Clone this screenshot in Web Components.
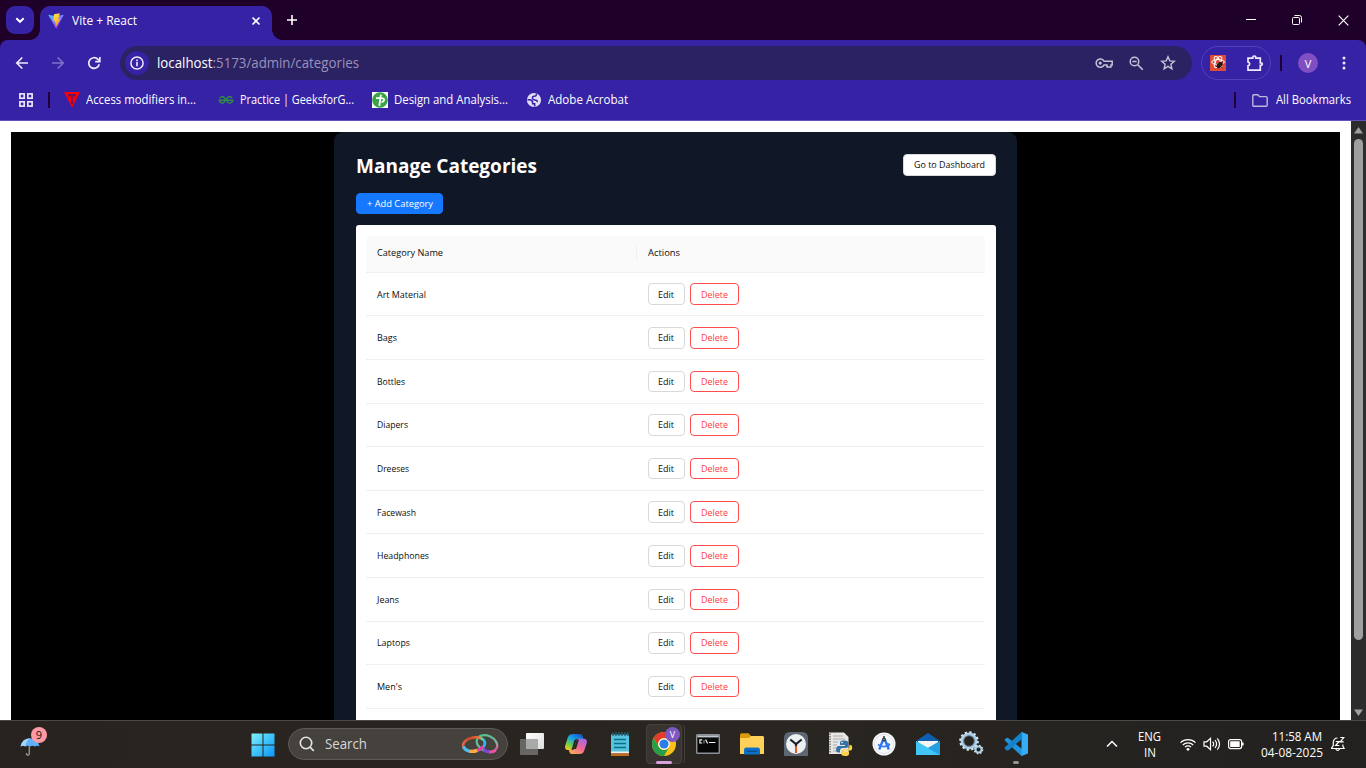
<!DOCTYPE html>
<html lang="en">
<head>
<meta charset="utf-8">
<title>Vite + React</title>
<style>
html,body{margin:0;width:1366px;height:768px;overflow:hidden;background:#000}
body{font-family:"Open Sans","Noto Sans",sans-serif}
</style>
</head>
<body>
<desktop-screen></desktop-screen>
<script>
function define(name, html, after){
  const t=document.createElement('template');
  t.innerHTML=html;
  customElements.define(name,class extends HTMLElement{
    connectedCallback(){
      if(this.shadowRoot)return;
      this.attachShadow({mode:'open'}).appendChild(t.content.cloneNode(true));
      if(after)after.call(this,this.shadowRoot);
    }
  });
}

/* Icons, each as [width, height, markup] */
const S='fill="none" stroke="currentColor"';
const ICONS={
 chevdown:[12,12,`<path d="M2.3 4.2 6 7.8 9.7 4.2" ${S} stroke-width="1.9"/>`],
 chevup:[12,12,`<path d="M1 8.5 6 3.5 11 8.5" ${S} stroke-width="1.5"/>`],
 vite:[16,16,`<defs><linearGradient id="a" x1="0" y1="0" x2=".6" y2="1"><stop stop-color="#41c5ff"/><stop offset="1" stop-color="#b838fb"/></linearGradient><linearGradient id="b" x1=".3" y1="0" x2=".6" y2="1"><stop stop-color="#ffe14b"/><stop offset="1" stop-color="#ff9d0a"/></linearGradient></defs><path d="M.2 1.8 8 3.2l7.8-1.4L8.3 15.8z" fill="url(#a)"/><path d="M11.8.2 6 1.2 5.2 8.2l2-.3-.5 2.5 1.5-.4-.7 4.1 4.9-8-2.1.3z" fill="url(#b)"/>`],
 x:[10,10,`<path d="M1.5 1.5l7 7M8.5 1.5l-7 7" ${S} stroke-width="1.6"/>`],
 plus:[12,12,`<path d="M6 1v10M1 6h10" ${S} stroke-width="1.6"/>`],
 min:[10,10,`<path d="M0 4.5h10" ${S}/>`],
 restore:[10,10,`<rect x=".5" y="2.5" width="7" height="7" rx="1" ${S}/><path d="M2.5.5h5a2 2 0 0 1 2 2v5" ${S}/>`],
 close:[11,11,`<path d="M.7.7l9.6 9.6M10.3.7.7 10.3" ${S} stroke-width="1.2"/>`],
 back:[14,14,`<path d="M13 7H2M7.3 1.5 1.8 7l5.5 5.5" ${S} stroke-width="1.7"/>`],
 fwd:[14,14,`<path d="M1 7h11M6.7 1.5 12.2 7l-5.5 5.5" ${S} stroke-width="1.6"/>`],
 reload:[14,14,`<path d="M12.2 8.2A5.3 5.3 0 1 1 10.9 3.4L12 4.5" ${S} stroke-width="1.7"/><path d="M12.8 1v4.6H8.2" ${S} stroke-width="1.7"/>`],
 info:[14,14,`<circle cx="7" cy="7" r="6.1" ${S} stroke-width="1.5"/><path d="M7 6v4.3M7 3.6v1.6" ${S} stroke-width="1.6"/>`],
 key:[18,12,`<path d="M9.1 4.3A4.2 4.2 0 1 0 9.1 7.9H12v2h4v-2h1.2V4.3z" ${S} stroke-width="1.5"/><circle cx="5.2" cy="6.1" r="1.6" fill="currentColor"/>`],
 lens:[15,15,`<circle cx="5.5" cy="5.5" r="4.3" ${S} stroke-width="1.5"/><path d="M8.8 8.8l5 5M3.3 5.5h4.4" ${S} stroke-width="1.6"/>`],
 star:[16,16,`<path d="M8 1.7l1.8 4.2 4.5.4-3.4 3 1 4.5L8 11.4l-3.9 2.4 1-4.5-3.4-3 4.5-.4z" ${S} stroke-width="1.4"/>`],
 ext:[16,16,`<rect width="16" height="16" fill="#df4b37"/><g fill="none" stroke="#fff" stroke-width="1"><ellipse cx="8" cy="7" rx="6.3" ry="2.5"/><ellipse cx="8" cy="7" rx="6" ry="2.5" transform="rotate(60 8 7)"/><ellipse cx="8" cy="7" rx="6" ry="2.5" transform="rotate(120 8 7)"/></g><ellipse cx="9.7" cy="10" rx="2.3" ry="3.6" transform="rotate(35 9.7 10)" fill="#2b1414"/><path d="M6 8.500l6.500 4.500M12.5 6.500l-5 6.500M6 11.500l7-2.500" stroke="#2b1414" stroke-width=".8"/>`],
 puzzle:[18,18,`<path d="M2 4.200h4.800V3.500a1.500 1.500 0 0 1 3 0v.7h4.500v4.600h.7a1.300 1.300 0 0 1 0 2.600h-.7v4.800H2v-4.300a2.100 2.100 0 0 0 0-4.100z" ${S} stroke-width="1.7"/>`],
 dots:[4,16,`<g fill="currentColor"><circle cx="2" cy="3" r="1.5"/><circle cx="2" cy="8" r="1.5"/><circle cx="2" cy="13" r="1.5"/></g>`],
 apps:[14,14,`<g fill="none" stroke="#e9e4fa" stroke-width="1.7"><rect x=".9" y=".9" width="4.3" height="4.3"/><rect x="8.8" y=".9" width="4.3" height="4.3"/><rect x=".9" y="8.8" width="4.3" height="4.3"/><rect x="8.8" y="8.8" width="4.3" height="4.3"/></g>`],
 tri:[16,16,`<path d="M0 0h16L8 15.8z" fill="#fb0007"/><path d="M5 4.800V2.700h6v2.100M8 3v8M6.800 11h2.400" fill="none" stroke="#52146e" stroke-width="1.400"/>`],
 gfg:[16,10,`<path d="M1.800 3A3.100 3.100 0 1 1 1.200 5.200H14.800A3.100 3.100 0 1 1 14.200 3" fill="none" stroke="#2f8d46" stroke-width="1.400"/>`],
 tp:[16,16,`<rect width="16" height="16" fill="#fff"/><circle cx="8" cy="8" r="7.8" fill="#3ba444"/><path d="M4 6.200h4.500q3.800-.3 3.600 1.800-.5 2-2.600 1.800M8.900 2.700 7.300 14" fill="none" stroke="#fff" stroke-width="1.800"/>`],
 globe:[16,16,`<circle cx="8" cy="8" r="7.1" fill="#dfdcf2"/><path d="M10.300 1.600q.5 2.700-2.100 2.700-2 0-1.700 2 .4 1.700 2.500 1.700 2.500.2 2.200 2.200M1.500 7.800h2.600q2.500.5 2.500 2.700v1.300h2.100v2.700" fill="none" stroke="#3622a5" stroke-width="1.500"/>`],
 folder:[16,13,`<path d="M.8 10.900V2q0-1.200 1.200-1.200h3.700l1.800 1.800H14q1.200 0 1.200 1.200V11q0 1.200-1.200 1.200H2Q.8 12.200.8 11z" fill="none" stroke="#bdb8d9" stroke-width="1.400"/>`],
 up:[9,7,`<path d="M4.5 0 9 6.4H0z" fill="#9f9f9f"/>`],
 down:[9,7,`<path d="M4.5 7 9 .6H0z" fill="#9f9f9f"/>`],
 umbrella:[20,20,`<path d="M9.3 8v9.5q0 1.700-1.400 1.700T6.500 17" fill="none" stroke="#8d8b88" stroke-width="1.500"/><path d="M.5 10.500Q2 2.600 10 2.200q8 .4 9.500 8.300-2.300-1.400-4.600 0-2.300-1.400-4.800 0-2.300-1.400-4.700 0-2.300-1.400-4.900 0z" fill="#5fb2f8"/><path d="M.5 10.500Q2 2.600 10 2.200q-4 3-4.600 8.300-2.300-1.400-4.900 0z" fill="#a5d4fb"/>`],
 start:[24,24,`<defs><linearGradient id="w" gradientUnits="userSpaceOnUse" x1="0" y1="0" x2="24" y2="24"><stop stop-color="#86f2fb"/><stop offset=".5" stop-color="#3fc3fb"/><stop offset="1" stop-color="#0b93fb"/></linearGradient></defs><path d="M.5.5H11.500v11H.5zM12.500.5h11v11h-11zM.5 12.500h11v11H.5zM12.500 12.500h11v11h-11z" fill="url(#w)"/>`],
 search:[16,16,`<circle cx="7" cy="7" r="5.7" fill="none" stroke="#e7e6e4" stroke-width="1.6"/><path d="M11 11l3.8 4" stroke="#e7e6e4" stroke-width="1.8"/>`],
 rings:[38,22,`<defs><linearGradient id="r1" x1="0" x2="1" y2=".3"><stop stop-color="#f4765b"/><stop offset=".3" stop-color="#c64727"/><stop offset=".75" stop-color="#f6703f"/><stop offset=".9" stop-color="#54dc9b"/><stop offset="1" stop-color="#31baf0"/></linearGradient><linearGradient id="r2" x1="0" x2="1" y2=".6"><stop stop-color="#42c984"/><stop offset=".45" stop-color="#69b997"/><stop offset=".75" stop-color="#8fae9c"/><stop offset="1" stop-color="#d95a9d"/></linearGradient></defs><ellipse cx="26" cy="10.500" rx="10.800" ry="7.600" transform="rotate(25 26 10.500)" fill="none" stroke="url(#r2)" stroke-width="2.200"/><ellipse cx="13" cy="11.300" rx="11" ry="6.800" transform="rotate(-10 13 11.300)" fill="none" stroke="url(#r1)" stroke-width="2.600"/><path d="M2.300 13.500q2 4 6 4.700" fill="none" stroke="#48bdf0" stroke-width="3"/><path d="M8.300 18.200q4 .7 8-.9" fill="none" stroke="#ffad42" stroke-width="3.400"/><path d="M16.300 17.300q3.500-1.200 6-3.800" fill="none" stroke="#e83bab" stroke-width="3.200"/><path d="M22.500 16.500q3 2.200 6 2.600" fill="none" stroke="#7b45df" stroke-width="2.800"/><path d="M28.500 19.100q4 .3 6-1.600" fill="none" stroke="#ea50a0" stroke-width="2.800"/>`],
 taskview:[24,24,`<defs><linearGradient id="t" y2="1" x2="1"><stop stop-color="#fff"/><stop offset="1" stop-color="#dcdcdc"/></linearGradient></defs><rect x="6" y="1" width="18" height="16" rx="1" fill="url(#t)"/><rect x="0" y="7" width="18" height="16" rx="1" fill="#676665"/><path d="M6 7h12v10H6z" fill="#a9a9a8"/>`],
 copilot:[24,24,`<defs><linearGradient id="c1" x1=".8" x2=".2" y2="1"><stop stop-color="#1555cf"/><stop offset=".4" stop-color="#18a7e1"/><stop offset=".75" stop-color="#76cf4a"/><stop offset="1" stop-color="#f5c51b"/></linearGradient><linearGradient id="c2" x1=".8" x2=".2" y2="1"><stop stop-color="#a169e7"/><stop offset=".5" stop-color="#ee659b"/><stop offset="1" stop-color="#ffac54"/></linearGradient></defs><path d="M13 2h3.200q1.800.2 2.400 2.100l.9 2.900H16q-2 .1-2.700 2.400L11.200 16q-.8 2.100-2.700 2.100H4Q.4 18 1.200 13.800L3.800 5.500Q5 2 8.300 2z" fill="url(#c1)"/><path d="M14.500 7Q13 7 12.300 9L9.500 18H7.500L10.300 8.500Q10.900 7 12.500 7z" fill="#292520"/><path d="M11 22H7.800q-1.800-.2-2.400-2.100l-.6-1.800H8q2-.1 2.700-2.400L12.800 9q.8-2.200 2.700-2.300H20q3.500.2 2.800 4.300l-2.600 7.700Q19 22 15.700 22z" fill="url(#c2)"/><path d="M15 7.500 12 17h-2.200l2.500-8q.6-1.500 2.700-1.500z" fill="#292520"/>`],
 notepad:[20,24,`<path d="M1 2.500h18V20H1z" fill="#56c3df"/><path d="M1 19.500h18v2H1z" fill="#f4f1ec"/><path d="M1 21.500h18V24H1z" fill="#c36c20"/><path d="M3 0v4M6 0v4M9 0v4M12 0v4M15 0v4M18 0v4" stroke="#1e6376" stroke-width="1.400"/><path d="M4 7.500h12M4 11.500h12M4 15.500h12" stroke="#0b6d89" stroke-width="1.500"/>`],
 chrome:[24,24,`<circle cx="12" cy="12" r="12" fill="#fbc116"/><path d="M1.600 6A12 12 0 0 1 22.400 6H12A6 6 0 0 0 6.800 15z" fill="#e33b2e"/><path d="M1.600 6A12 12 0 0 0 12 24L17.200 15A6 6 0 0 1 6.800 15z" fill="#269f48"/><circle cx="12" cy="12" r="5.800" fill="#fff"/><circle cx="12" cy="12" r="4.600" fill="#2b7de9"/>`],
 cmd:[24,20,`<rect x=".7" y=".7" width="22.600" height="18.600" rx=".6" fill="#070707" stroke="#8c9097" stroke-width="1.400"/><path d="M1.400 1.400h21.200v2H1.400z" fill="#c2c8d0"/><path d="M6.200 5.900H3.900v3.100h2.300M8 6.500v.9M8 8.400v.8M9.600 5.500l2 4M13 8.500h6.500" fill="none" stroke="#f1f1f1" stroke-width="1.200"/>`],
 explorer:[26,24,`<path d="M1 3q0-1.700 1.600-1.700h7L12 4h11q2 0 2 2v15H1z" fill="#d99b0a"/><path d="M1 6h9l2-2h11.500Q25 4 25 6v16H1z" fill="#ffd158"/><path d="M5 22.500v-4.500q0-2.500 2.500-2.500h11Q21 15.500 21 18v4.500z" fill="#0b70c8"/><path d="M8 18.500h10V20H8z" fill="#084f93"/>`],
 clock:[26,26,`<path d="M1 7q0-6 6-6h12q6 0 6 6v18H1z" fill="#5c6773"/><circle cx="13" cy="13" r="10" fill="#edf0f2"/><path d="M7.300 8.500 13 13l5.700-4.500" fill="none" stroke="#1a222c" stroke-width="2.200"/><path d="M13 12.500v3" stroke="#1a222c" stroke-width="2.200"/><path d="M13 15v7" stroke="#e2571a" stroke-width="2"/>`],
 py:[24,24,`<path d="M1 .5h15l4.500 4.500V22H1z" fill="#e7e6e4"/><path d="M2 1.500v20" stroke="#777" stroke-width="1.500" stroke-dasharray="1.500 1"/><path d="M5 4h10M5 7h12M5 10h5M5 13h4M5 16h3M5 19h4" stroke="#aaa"/><path d="M16 8.500q-4-.3-4 2.300V13h5v1h-7q-2 .5-2 3.500t2.500 3H12v-2.300q.2-2 2.300-2.200h4q2-.3 2-2.300v-3q-.3-2.300-4.300-2.200z" fill="#3473a5"/><path d="M17 24q4 .1 4-2.300V19.500h-5v-1h7q1.500-.5 1.200-3.500-.4-2.500-2.800-2.300v2.300q-.2 2-2.300 2.200h-4q-2 .3-2 2.300v2q.3 2.500 3.900 2.500z" fill="#fcd34b"/><circle cx="14" cy="10.500" r=".8" fill="#fff"/>`],
 studio:[24,24,`<circle cx="12" cy="12" r="11.500" fill="#f6f8fb"/><circle cx="12" cy="12" r="9.600" fill="none" stroke="#d5d9e0" stroke-width=".8"/><path d="M14 10.500 18.500 12l-2 4z" fill="#2fa85a"/><path d="M11.200 7.500 7.200 17.500M12.800 7.500l4 10" stroke="#2d73ee" stroke-width="2.300"/><path d="M6 12.500q6 4.500 11.500-.5" fill="none" stroke="#3c7cf0" stroke-width="1.700"/><circle cx="12" cy="7.500" r="1.400" fill="#8fa9c4" stroke="#253745" stroke-width="1.200"/><path d="M12 4v2.500" stroke="#253745" stroke-width="1.500"/>`],
 mail:[26,24,`<path d="M1 9 13 1l12 8z" fill="#0b5fae"/><path d="M3 9h20v10H3z" fill="#f6f5f3"/><path d="M1 9l12 7L25 9v14H1z" fill="#31b8ed"/><path d="M1 9l12 7 12 7H1z" fill="#41c6f5"/><path d="M25 9v14L13 16z" fill="#249fe0"/>`],
 gears:[26,26,`<circle cx="10" cy="10" r="7" fill="none" stroke="#a9cce6" stroke-width="3"/><circle cx="10" cy="10" r="8.800" fill="none" stroke="#d5e7f3" stroke-width="2" stroke-dasharray="2.300 2.308"/><circle cx="10" cy="10" r="5.300" fill="none" stroke="#6e879d" stroke-width=".8"/><circle cx="19.500" cy="18.500" r="3" fill="none" stroke="#a9cce6" stroke-width="2"/><circle cx="19.500" cy="18.500" r="4.200" fill="none" stroke="#d5e7f3" stroke-width="1.300" stroke-dasharray="1.600 1.699"/>`],
 vscode:[24,24,`<path d="M17.500 0 24 2.800v18.400L17.500 24 1.500 9.300Q0 8 1.200 7l1.300-1q1-.6 2 .2L18 17V7z" fill="#1f93e0"/><path d="M17.500 0 24 2.800v18.400L17.500 24z" fill="#35adf5"/><path d="M17.500 0 1.200 15Q0 16 1.200 17.200l1.300 1.100q1 .6 2-.1L18 7z" fill="#1681cb"/>`],
 wifi:[18,16,`<g fill="none" stroke="#fff" stroke-width="1.200"><path d="M1.500 6.700a10.500 10.500 0 0 1 15 0M3.800 9a7.300 7.300 0 0 1 10.400 0M6 11.200a4.200 4.200 0 0 1 6 0"/></g><circle cx="9" cy="13.300" r="1.400" fill="#fff"/>`],
 vol:[18,16,`<path d="M1 5.800h2.700L7.500 2.300v11.400L3.700 10.200H1z M9.700 5.500q1.900 2.500 0 5M12 4q3.200 4 0 8M14.300 2.300q4.500 5.700 0 11.400" fill="none" stroke="#fff" stroke-width="1.200"/>`],
 battery:[18,12,`<rect x="1.600" y="1.600" width="13" height="9" rx="2" fill="none" stroke="#fff" stroke-width="1.200"/><rect x="3.200" y="3.200" width="9.500" height="5.800" rx=".6" fill="#fff"/><path d="M15.800 4.500v3" stroke="#fff" stroke-width="1.600"/>`],
 bell:[16,16,`<path d="M7.500 2Q4 1.800 3.300 6v3.500L1.600 12v.5h12.500l-1.300-2.600V8.500M5.700 13q2 2.700 4 0M5.700 5.500h3.300L5.700 9.500H9.300M10.300 1.500h3.400l-3.400 4.300h3.400" fill="none" stroke="#fff" stroke-width="1.200"/>`]
};
define('ui-icon',`<style>:host{display:flex;align-items:center;justify-content:center;flex:none}svg{display:block;overflow:visible}</style>`,function(r){
  const [w,h,m]=ICONS[this.getAttribute('name')];
  r.innerHTML+=`<svg width="${w}" height="${h}" viewBox="0 0 ${w} ${h}">${m}</svg>`;
});

/* A single line of text condensed or widened to the width in "w" */
define('fit-text',`<style>:host{display:block;flex:none;white-space:nowrap}span{display:inline-block;transform-origin:0 50%}</style><span><slot></slot></span>`,function(r){
  const w=+this.getAttribute('w'),s=r.querySelector('span');
  this.style.width=w+'px';
  const n=s.getBoundingClientRect().width;
  if(n)s.style.transform=`scaleX(${w/n})`;
});

define('v-avatar',`<style>:host{display:flex;align-items:center;justify-content:center;border-radius:50%;background:#8050c2;color:#fff;flex:none}</style><slot></slot>`);

define('tab-strip',`<style>
:host{display:flex;height:40px;background:#1f0029;color:#fff;align-items:flex-end;font-size:12px}
.s{width:28px;height:28px;border-radius:9px;background:#3622a5;margin:0 6px 6px}
.tab{width:232px;height:34px;box-sizing:border-box;background:#3622a5;border-radius:10px 10px 0 0;display:flex;align-items:center;padding:0 11px 5px 8px;position:relative}
.tab:before,.tab:after{content:"";position:absolute;bottom:0;width:10px;height:10px}
.tab:before{left:-10px;background:radial-gradient(circle at 0 0,#0000 9.5px,#3622a5 10px)}
.tab:after{right:-10px;background:radial-gradient(circle at 100% 0,#0000 9.5px,#3622a5 10px)}
fit-text{margin:0 auto 0 8px}
.p{height:40px;width:40px}.win{margin-left:auto;display:flex;height:40px}.win ui-icon{width:46px}
</style>
<ui-icon class="s" name="chevdown"></ui-icon>
<div class="tab"><ui-icon name="vite"></ui-icon><fit-text w="65">Vite + React</fit-text><ui-icon name="x"></ui-icon></div>
<ui-icon class="p" name="plus"></ui-icon>
<div class="win"><ui-icon name="min"></ui-icon><ui-icon name="restore"></ui-icon><ui-icon name="close"></ui-icon></div>`);

define('address-bar',`<style>
:host{display:flex;height:46px;background:#3622a5;border-radius:8px 8px 0 0;align-items:center;padding:0 4px;color:#efeafd}
.n{width:36px}.f{opacity:.4}
.omni{margin-left:8px;width:1072px;height:34px;border-radius:17px;background:#2b2263;display:flex;align-items:center;box-sizing:border-box;padding:0 8px 0 5px;font-size:14px}
.i{width:24px;height:24px;border-radius:50%;background:#3622a5;margin-right:8px}
.omni b{font-weight:400;color:#fff}.omni fit-text{color:#9a93b9;margin-right:auto;padding-bottom:1px}
.a{width:32px;color:#c5c1d6}
.pill{margin-left:9px;width:70px;height:34px;box-sizing:border-box;border:1px solid #523fba;border-radius:17px;display:flex;align-items:center;padding-left:8px;gap:20px}
.d{width:2px;height:16px;background:#1f0038;margin-left:9px}
v-avatar{width:20px;height:20px;font-size:11px;margin:0 8px 0 16px}
</style>
<ui-icon class="n" name="back"></ui-icon><ui-icon class="n f" name="fwd"></ui-icon><ui-icon class="n" name="reload"></ui-icon>
<div class="omni"><ui-icon class="i" name="info"></ui-icon><fit-text w="202"><b>localhost</b>:5173/admin/categories</fit-text>
<ui-icon class="a" name="key"></ui-icon><ui-icon class="a" name="lens"></ui-icon><ui-icon class="a" name="star"></ui-icon></div>
<div class="pill"><ui-icon name="ext"></ui-icon><ui-icon name="puzzle"></ui-icon></div><div class="d"></div><v-avatar>V</v-avatar><ui-icon class="n" name="dots"></ui-icon>`);

customElements.define('bookmarks-bar',class extends HTMLElement{
  connectedCallback(){
    const items=[['tri','Access modifiers in...',110,0],['gfg','Practice | GeeksforG...',114,22],['tp','Design and Analysis...',114,18],['globe','Adobe Acrobat',80,18]];
    this.attachShadow({mode:'open'}).innerHTML=`<style>
:host{display:flex;height:28px;padding:0 15px 6px 19px;background:#3622a5;border-bottom:1px solid #6450b8;align-items:center;color:#fff;font-size:12px}
.d{width:2px;height:16px;background:#1f0038;margin:0 14px 0 15px}.m{display:flex;align-items:center}.m ui-icon{width:16px;margin-right:6px}
fit-text{padding-bottom:1px}
.r{margin:0 16px 0 auto}.r+ui-icon{margin-right:8px}</style>
<ui-icon name="apps"></ui-icon><div class="d"></div>${items.map(([i,t,w,g])=>`<div class="m" style="margin-left:${g}px"><ui-icon name="${i}"></ui-icon><fit-text w="${w}">${t}</fit-text></div>`).join('')}
<div class="d r"></div><ui-icon name="folder"></ui-icon><fit-text w="75">All Bookmarks</fit-text>`;
  }
});

define('ant-button',`<style>:host{display:flex;box-sizing:border-box;height:22px;border:1px solid #d9d9d9;border-radius:4px;background:#fff;color:#0c0c0c;align-items:center;justify-content:center;font-size:9.3px;line-height:14px;padding-right:1px}
:host([primary]){background:#1677ff;border-color:#1677ff;color:#fff;height:21px;padding-right:0}
:host([danger]){border-color:#ff4d4f;color:#ff3a3d;padding-right:0}</style><slot></slot>`);

customElements.define('category-table',class extends HTMLElement{
  connectedCallback(){
    const rows=[['Art Material',49],['Bags',20],['Bottles',28],['Diapers',31],['Dreeses',32],['Facewash',39],['Headphones',52],['Jeans',22],['Laptops',33],["Men's",25]];
    this.attachShadow({mode:'open'}).innerHTML=`<style>
:host{display:block;background:#fff;border-radius:3px;padding:11px 11px 0 10px;font-size:9.3px;color:#0c0c0c}
.h,.r{display:grid;grid-template-columns:271px 1fr;align-items:center;box-sizing:border-box;border-bottom:1px solid #f0f0f0}
.h{height:36.85px;background:#fafafa;border-radius:5px 5px 0 0;font-weight:500}
.r{height:43.6px}.h fit-text,.r>fit-text{margin-left:11px}
.h fit-text{padding-bottom:2px}
.h div{display:flex;border-left:1px solid #f0f0f0;margin-left:-1px;height:15px;align-items:center}
.h div fit-text{margin-left:10.5px}
.b{display:flex;gap:5px;padding-left:11px}
.b ant-button{height:21.6px}
.b fit-text{padding-top:1px}
.b ant-button:first-child{width:37px}.b ant-button:last-child{width:49px}</style>
<div class="h"><fit-text w="66">Category Name</fit-text><div><fit-text w="32">Actions</fit-text></div></div>
${rows.map(([n,w])=>`<div class="r"><fit-text w="${w}">${n}</fit-text><div class="b"><ant-button><fit-text w="16">Edit</fit-text></ant-button><ant-button danger><fit-text w="27">Delete</fit-text></ant-button></div></div>`).join('')}`;
  }
});

define('admin-page',`<style>
:host{display:flex;height:599px;overflow:hidden;background:#fff}
.v{flex:1;padding:11px 11px 0;display:flex}
.k{flex:1;background:#000;display:flex;justify-content:center}
.card{width:683px;box-sizing:border-box;background:#101726;border-radius:9px 9px 0 0;padding:22px 21px 0 22px}
.top{display:flex;justify-content:space-between;align-items:flex-start;height:39px}
h1{margin:-2px 0 0;font-size:20px;line-height:27px;font-weight:700;color:#fff}
.top ant-button{width:93px}.add{width:87px;margin-bottom:11px}
category-table{height:500px}
.sb{width:15px;background:#2c2c2c;display:flex;flex-direction:column;align-items:center}
.sb ui-icon{height:18px}.th{width:9px;height:501px;border-radius:5px;background:#9f9f9f;margin-bottom:auto}
.dn{margin-bottom:-1px}
</style><div class="v"><div class="k"><div class="card"><div class="top"><h1><fit-text w="181">Manage Categories</fit-text></h1><ant-button><fit-text w="71">Go to Dashboard</fit-text></ant-button></div>
<ant-button primary class="add"><fit-text w="66">+ Add Category</fit-text></ant-button><category-table></category-table></div></div></div>
<div class="sb"><ui-icon name="up"></ui-icon><div class="th"></div><ui-icon class="dn" name="down"></ui-icon></div>`);

define('task-bar',`<style>
:host{display:flex;height:48px;box-sizing:border-box;border-top:1px solid #4b4946;background:linear-gradient(90deg,#28231e,#292520 60%,#222120);align-items:center;color:#fff;font-size:12px}
.w{position:relative;margin:2px 223px 0 20px;width:20px}
.bd{position:absolute;left:11px;top:-9px;width:16px;height:16px;border-radius:50%;background:#ff99a4;color:#111;font-size:11px;line-height:16px;text-align:center}
.st{width:24px;margin:0 13px 0 -12px}
.q{width:220px;height:32px;box-sizing:border-box;border:1px solid #5c5a55;border-radius:16px;background:#45423d;display:flex;align-items:center;padding:0 8px 0 10px;font-size:14px;color:#d9d8d6;margin:0 2px 1px 0}
.q fit-text{margin:0 auto 0 10px;padding-bottom:1px}
.a{width:44px;height:45px;padding-bottom:2px}
.c{position:relative;width:44px;height:45px;padding-bottom:2px;display:flex;align-items:center;justify-content:center}
.c:before{content:"";position:absolute;left:4px;right:4px;top:3px;bottom:4px;background:#383530;border:1px solid #44413d;box-shadow:3px 0 0 -1px #292520,4px 0 0 -1px #44413d;border-radius:4px;box-sizing:border-box}
.c ui-icon{position:relative}
.c v-avatar{position:absolute;left:23px;top:6px;width:15px;height:15px;font-size:9px;background:#7e57c2}
.c i{position:absolute;bottom:4px;left:14px;width:16px;height:3px;border-radius:2px;background:#d8a0df}
.vs{position:relative}.vs i{position:absolute;bottom:4px;left:19px;width:6px;height:3px;border-radius:2px;background:#969492}
.tray{margin-left:auto;display:flex;align-items:center;padding:0 20px 1px 0}
.l{display:flex;flex-direction:column;align-items:center;line-height:16px;margin:2px 17.5px 0 20px}
.t{display:flex;flex-direction:column;align-items:flex-end;line-height:16px;margin:1px 7px 0 16.5px}
.t fit-text:first-child{margin-right:1px}
.g{margin-right:6px}
</style>
<div class="w"><ui-icon name="umbrella"></ui-icon><span class="bd">9</span></div>
<ui-icon class="st" name="start"></ui-icon>
<div class="q"><ui-icon name="search"></ui-icon><fit-text w="42">Search</fit-text><ui-icon name="rings"></ui-icon></div>
<ui-icon class="a" name="taskview"></ui-icon><ui-icon class="a" name="copilot"></ui-icon><ui-icon class="a" name="notepad"></ui-icon>
<div class="c"><ui-icon name="chrome"></ui-icon><v-avatar>V</v-avatar><i></i></div>
<ui-icon class="a" name="cmd"></ui-icon><ui-icon class="a" name="explorer"></ui-icon><ui-icon class="a" name="clock"></ui-icon><ui-icon class="a" name="py"></ui-icon><ui-icon class="a" name="studio"></ui-icon><ui-icon class="a" name="mail"></ui-icon><ui-icon class="a" name="gears"></ui-icon>
<div class="vs"><ui-icon class="a" name="vscode"></ui-icon><i></i></div>
<div class="tray"><ui-icon name="chevup"></ui-icon><div class="l"><fit-text w="23">ENG</fit-text><fit-text w="12">IN</fit-text></div>
<ui-icon class="g" name="wifi"></ui-icon><ui-icon class="g" name="vol"></ui-icon><ui-icon name="battery"></ui-icon>
<div class="t"><fit-text w="50">11:58 AM</fit-text><fit-text w="62">04-08-2025</fit-text></div><ui-icon name="bell"></ui-icon></div>`);

define('desktop-screen',`<style>:host{display:flex;flex-direction:column;width:1366px;height:768px;overflow:hidden;background:#1f0029}</style>
<tab-strip></tab-strip><address-bar></address-bar><bookmarks-bar></bookmarks-bar><admin-page></admin-page><task-bar></task-bar>`);
</script>
</body>
</html>
